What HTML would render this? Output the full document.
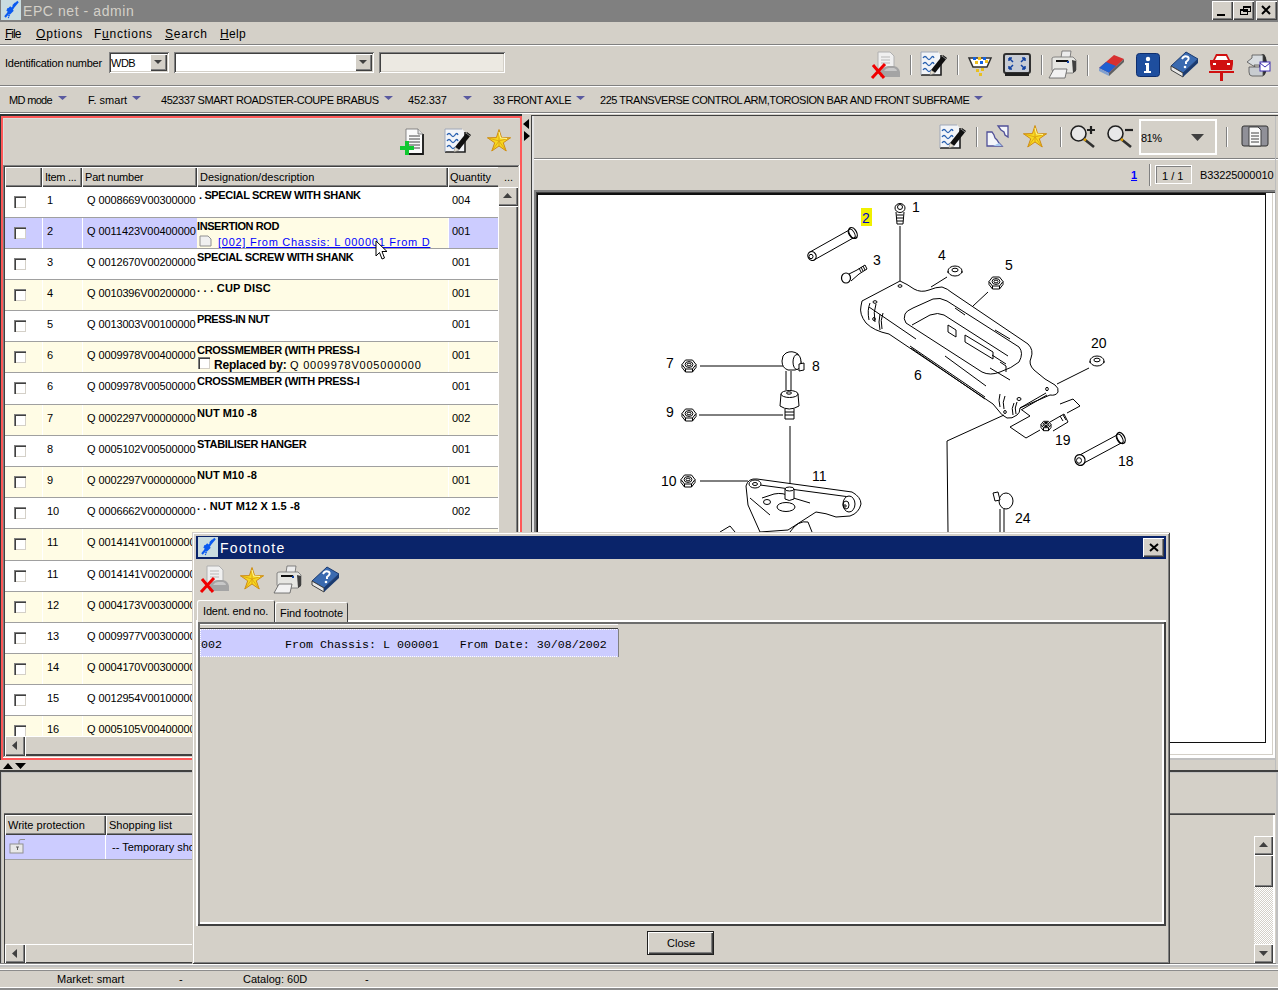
<!DOCTYPE html>
<html><head><meta charset="utf-8">
<style>
*{margin:0;padding:0;box-sizing:border-box}
html,body{width:1278px;height:990px;overflow:hidden;background:#d4d0c8;font-family:"Liberation Sans",sans-serif;font-size:11px;color:#000;position:relative}
.a{position:absolute}
.t{position:absolute;white-space:nowrap;line-height:1}
.raised{box-shadow:inset 1px 1px #fff,inset -1px -1px #404040,inset -2px -2px #808080;background:#d4d0c8}
.sunk{box-shadow:inset 1px 1px #808080,inset -1px -1px #fff,inset 2px 2px #404040,inset -2px -2px #d4d0c8}
svg{overflow:visible}
</style></head><body>
<div class="a" style="left:0px;top:0px;width:1278px;height:22px;background:#808080"></div><svg class="a" style="left:1px;top:0px" width="20" height="20" viewBox="0 0 20 20"><rect width="20" height="20" fill="#c9dce0"/><path d="M4 17 L17 1.5" stroke="#0a5af0" stroke-width="2"/><path d="M7 13 l5 -5 M6 11 l4 -4 M8 14 l4 -4 M12 6 l3 -3" stroke="#0a5af0" stroke-width="2.2"/><circle cx="7" cy="9" r="0.9" fill="#0a5af0"/><circle cx="8" cy="15.5" r="0.9" fill="#0a5af0"/><circle cx="7.5" cy="17.5" r="0.7" fill="#0a5af0"/></svg><div class="t" style="left:23px;top:4px;font-size:14px;color:#d4d0c8;letter-spacing:0.571px;">EPC net - admin</div><div class="a raised" style="left:1212px;top:1px;width:21px;height:19px;"></div><div class="a raised" style="left:1233px;top:1px;width:21px;height:19px;"></div><div class="a raised" style="left:1256px;top:1px;width:21px;height:19px;"></div><div class="a" style="left:1217px;top:14px;width:8px;height:2px;background:#000"></div><div class="a" style="left:1240px;top:9px;width:8px;height:6px;border:1px solid #000;border-top-width:2px"></div><div class="a" style="left:1243px;top:6px;width:8px;height:6px;border:1px solid #000;border-top-width:2px"></div><svg class="a" style="left:1261px;top:5px" width="11" height="10" viewBox="0 0 11 10"><path d="M1 1 L9 9 M9 1 L1 9" stroke="#000" stroke-width="2"/></svg><div class="t" style="left:5px;top:28px;font-size:12px;;letter-spacing:-1.000px;"><u>F</u>ile</div><div class="t" style="left:36px;top:28px;font-size:12px;;letter-spacing:0.833px;"><u>O</u>ptions</div><div class="t" style="left:94px;top:28px;font-size:12px;;letter-spacing:0.750px;">F<u>u</u>nctions</div><div class="t" style="left:165px;top:28px;font-size:12px;;letter-spacing:0.800px;"><u>S</u>earch</div><div class="t" style="left:220px;top:28px;font-size:12px;;letter-spacing:0.333px;"><u>H</u>elp</div><div class="a" style="left:0px;top:44px;width:1278px;height:1px;background:#808080"></div><div class="a" style="left:0px;top:45px;width:1278px;height:1px;background:#fff"></div><div class="t" style="left:5px;top:58px;font-size:11px;;letter-spacing:-0.250px;">Identification number</div><div class="a sunk" style="left:109px;top:52px;width:60px;height:21px;background:#fff"></div><div class="t" style="left:111px;top:58px;font-size:11px;;letter-spacing:-0.500px;">WDB</div><div class="a raised" style="left:150px;top:54px;width:17px;height:17px;"></div><svg class="a" style="left:154px;top:60px" width="8" height="4" viewBox="0 0 8 4"><path d="M0 0 H8 L4.0 4 Z" fill="#404040"/></svg><div class="a sunk" style="left:174px;top:52px;width:200px;height:21px;background:#fff"></div><div class="a raised" style="left:355px;top:54px;width:17px;height:17px;"></div><svg class="a" style="left:359px;top:60px" width="8" height="4" viewBox="0 0 8 4"><path d="M0 0 H8 L4.0 4 Z" fill="#404040"/></svg><div class="a sunk" style="left:379px;top:52px;width:126px;height:21px;background:#ece9e2"></div><svg class="a" style="left:870px;top:51px" width="31" height="29" viewBox="0 0 31 29"><path d="M8 1 h12 l4 4 v15 h-16z" fill="#f0f0f0" stroke="#b0b0b0"/><path d="M11 6h9M11 9h9M11 12h9" stroke="#b8b8b8"/><path d="M10 22 Q12 16 18 15 H24 Q29 16 30 21 V26 H10Z" fill="#a4a4a4"/><path d="M14 20 Q16 17 19 17 H24 Q27 18 27 20Z" fill="#c8c8c8"/><path d="M3 14 L14 27 M15 13 L2 27" stroke="#f00000" stroke-width="3"/></svg><div class="a" style="left:910px;top:55px;width:1px;height:20px;background:#808080"></div><div class="a" style="left:911px;top:55px;width:1px;height:20px;background:#fff"></div><svg class="a" style="left:920px;top:51px" width="28" height="25" viewBox="0 0 28 25"><path d="M1 1 H18 L21 4 V24 H1Z" fill="#f2f4f8"/><path d="M21 4 V24 H1" fill="none" stroke="#202020" stroke-width="1.6"/><path d="M1 24 V1 H18" fill="none" stroke="#a0a8b8" stroke-width="1"/><path d="M3 7 q2-3 4 0 t4 0 t3 0 M3 13 q2-3 4 0 t4 0 t3 0 M3 19 q2-3 4 0 t4 0" fill="none" stroke="#2860b0" stroke-width="1.3"/><path d="M11 19 L23 4 L27 7 L15 22 Z" fill="#101010"/><path d="M11 19 L15 22 L10 24Z" fill="#e8e0d0" stroke="#808080" stroke-width="0.5"/><path d="M22 5 l4 3" stroke="#909090" stroke-width="1"/></svg><div class="a" style="left:957px;top:55px;width:1px;height:20px;background:#808080"></div><div class="a" style="left:958px;top:55px;width:1px;height:20px;background:#fff"></div><svg class="a" style="left:968px;top:55px" width="24" height="22" viewBox="0 0 24 22"><path d="M1 3 H23 L19 12 H5 Z" fill="#fff" stroke="#303030" stroke-width="1.5"/><rect x="5" y="2" width="3" height="3" fill="#1060e0"/><rect x="10" y="2" width="3" height="3" fill="#f0c020"/><rect x="15" y="2" width="3" height="3" fill="#1060e0"/><rect x="7" y="6" width="3" height="3" fill="#f0c020"/><rect x="12" y="6" width="3" height="3" fill="#1060e0"/><rect x="17" y="5" width="3" height="3" fill="#f0c020"/><rect x="8" y="14" width="3" height="3" fill="#e8c020"/><rect x="13" y="13" width="3" height="3" fill="#e8c020"/><rect x="11" y="18" width="3" height="3" fill="#e8c020"/></svg><svg class="a" style="left:1003px;top:53px" width="28" height="24" viewBox="0 0 28 24"><rect x="1" y="1" width="26" height="19" rx="2" fill="#c8ccd4" stroke="#303030" stroke-width="2"/><rect x="2" y="20" width="24" height="3" fill="#202020"/><path d="M6 5 l4 4 M6 5 v3 M6 5 h3 M22 5 l-4 4 M22 5 v3 M22 5 h-3 M6 16 l4-4 M6 16 v-3 M6 16 h3 M22 16 l-4-4 M22 16 v-3 M22 16 h-3" stroke="#1040a0" stroke-width="1.5"/></svg><div class="a" style="left:1041px;top:55px;width:1px;height:20px;background:#808080"></div><div class="a" style="left:1042px;top:55px;width:1px;height:20px;background:#fff"></div><svg class="a" style="left:1049px;top:50px" width="28" height="29" viewBox="0 0 28 29"><path d="M13 1 h9 l-1 7 h-9z" fill="#ececec" stroke="#6a6a6a" stroke-width="0.8"/><path d="M3 8 Q4 7 6 7 H24 L27 10 V20 L24 23 H5 L3 20Z" fill="#e6e6e2" stroke="#707070" stroke-width="0.8"/><path d="M7 10 H19 L20 12 H7Z" fill="#101010"/><rect x="18" y="11" width="2" height="2" fill="#1040a0"/><path d="M23 10 L27 11 V21 L24 23Z" fill="#404040"/><path d="M5 19 H18 L16 28 H0Z" fill="#f2f2f2" stroke="#5a5a5a" stroke-width="0.8"/></svg><div class="a" style="left:1087px;top:55px;width:1px;height:21px;background:#808080"></div><div class="a" style="left:1088px;top:55px;width:1px;height:21px;background:#fff"></div><svg class="a" style="left:1098px;top:51px" width="27" height="26" viewBox="0 0 27 26"><path d="M1 17 L16 4 L26 8 L11 22 Z" fill="#d83030"/><path d="M1 17 L8 11 L18 15 L11 22 Z" fill="#2060d0"/><path d="M1 17 L11 22 L11 25 L1 20 Z" fill="#80a0d0"/><path d="M11 22 L26 8 L26 11 L11 25z" fill="#606060"/></svg><svg class="a" style="left:1136px;top:53px" width="24" height="24" viewBox="0 0 24 24"><rect x="0.5" y="0.5" width="23" height="23" rx="3" fill="#1e4e9e" stroke="#0e2e6e"/><circle cx="12" cy="6" r="2.2" fill="#fff"/><path d="M9 10 h4 v8 h2 v2 h-7 v-2 h2 v-6 h-1z" fill="#fff"/></svg><svg class="a" style="left:1170px;top:51px" width="29" height="27" viewBox="0 0 29 27"><path d="M1 15 L16 1 L28 8 L13 22 Z" fill="#3a6ab0" stroke="#1a3a70"/><path d="M1 15 L13 22 L13 26 L1 19 Z" fill="#e8e8e8" stroke="#404040"/><path d="M13 22 L28 8 L28 12 L13 26z" fill="#1a3a70"/><path d="M12 8 q2-4 6-2 q2 2 -2 5 v2" fill="none" stroke="#fff" stroke-width="2"/><circle cx="15" cy="16" r="1.3" fill="#fff"/></svg><svg class="a" style="left:1208px;top:51px" width="27" height="30" viewBox="0 0 27 30"><path d="M5 9 L8 3 H19 L22 9 H25 V13 L24 19 H3 L2 13 V9 Z" fill="#d01010"/><path d="M9 5 H18 L20 9 H7Z" fill="#fff"/><rect x="5" y="12" width="3" height="2" fill="#fff"/><rect x="19" y="12" width="3" height="2" fill="#fff"/><rect x="1" y="20" width="25" height="2" fill="#d01010"/><rect x="12" y="21" width="3" height="9" fill="#d01010"/></svg><svg class="a" style="left:1246px;top:53px" width="25" height="24" viewBox="0 0 25 24"><ellipse cx="17" cy="12" rx="4" ry="11" fill="#303030"/><path d="M6 2 H17 V12 H8 L9 14 L1 9 L6 5Z" fill="#d8dce0" stroke="#505050" stroke-width="0.8"/><path d="M3 14 H17 V23 H6 Q3 23 3 19Z" fill="#c8ccd0" stroke="#505050" stroke-width="0.8"/><rect x="14" y="9" width="10" height="9" fill="#fff" stroke="#4030b0" stroke-width="1"/><path d="M14 10 L19 14 L24 10" fill="none" stroke="#4030b0" stroke-width="1"/></svg><div class="a" style="left:0px;top:85px;width:1278px;height:1px;background:#808080"></div><div class="a" style="left:0px;top:86px;width:1278px;height:1px;background:#fff"></div><div class="t" style="left:9px;top:95px;font-size:11px;;letter-spacing:-0.667px;">MD mode</div><svg class="a" style="left:58px;top:96px" width="9" height="4" viewBox="0 0 9 4"><path d="M0 0 H9 L4.5 4 Z" fill="#5a5aa0"/></svg><div class="t" style="left:88px;top:95px;font-size:11px;;letter-spacing:0.000px;">F. smart</div><svg class="a" style="left:132px;top:96px" width="9" height="4" viewBox="0 0 9 4"><path d="M0 0 H9 L4.5 4 Z" fill="#5a5aa0"/></svg><div class="t" style="left:161px;top:95px;font-size:11px;;letter-spacing:-0.455px;">452337 SMART ROADSTER-COUPE BRABUS</div><svg class="a" style="left:384px;top:96px" width="9" height="4" viewBox="0 0 9 4"><path d="M0 0 H9 L4.5 4 Z" fill="#5a5aa0"/></svg><div class="t" style="left:408px;top:95px;font-size:11px;;letter-spacing:-0.167px;">452.337</div><svg class="a" style="left:463px;top:96px" width="9" height="4" viewBox="0 0 9 4"><path d="M0 0 H9 L4.5 4 Z" fill="#5a5aa0"/></svg><div class="t" style="left:493px;top:95px;font-size:11px;;letter-spacing:-0.417px;">33 FRONT AXLE</div><svg class="a" style="left:576px;top:96px" width="9" height="4" viewBox="0 0 9 4"><path d="M0 0 H9 L4.5 4 Z" fill="#5a5aa0"/></svg><div class="t" style="left:600px;top:95px;font-size:11px;;letter-spacing:-0.474px;">225 TRANSVERSE CONTROL ARM,TOROSION BAR AND FRONT SUBFRAME</div><svg class="a" style="left:974px;top:96px" width="9" height="4" viewBox="0 0 9 4"><path d="M0 0 H9 L4.5 4 Z" fill="#5a5aa0"/></svg><div class="a" style="left:0px;top:112px;width:1278px;height:1px;background:#808080"></div><div class="a" style="left:0px;top:113px;width:1278px;height:1px;background:#fff"></div><div class="a" style="left:0px;top:114px;width:522px;height:2px;background:#2b3535"></div><div class="a" style="left:0px;top:114px;width:1px;height:646px;background:#2b3535"></div><div class="a" style="left:1px;top:116px;width:521px;height:644px;border:2px solid #ff5858"></div><div class="a" style="left:3px;top:757px;width:516px;height:1px;background:#fff"></div><div class="a" style="left:3px;top:118px;width:1px;height:638px;background:#d8e0dc"></div><div class="a" style="left:3px;top:118px;width:516px;height:1px;background:#d8e0dc"></div><svg class="a" style="left:400px;top:128px" width="24" height="28" viewBox="0 0 24 28"><path d="M6 1 H18 L23 6 V26 H6Z" fill="#fafafa" stroke="#707070" stroke-width="0.8"/><path d="M23 6 V26 H6" fill="none" stroke="#181818" stroke-width="1.8"/><path d="M18 1 V6 H23" fill="#e0e0e0" stroke="#707070" stroke-width="0.8"/><path d="M9 8h11M9 11h11M9 14h11M9 17h11M9 20h11" stroke="#303030" stroke-width="0.9"/><path d="M5 13 h4 v5 h5 v4 h-5 v5 h-4 v-5 h-5 v-4 h5z" fill="#10c830"/></svg><svg class="a" style="left:444px;top:128px" width="28" height="25" viewBox="0 0 28 25"><path d="M1 1 H18 L21 4 V24 H1Z" fill="#f2f4f8"/><path d="M21 4 V24 H1" fill="none" stroke="#202020" stroke-width="1.6"/><path d="M1 24 V1 H18" fill="none" stroke="#a0a8b8" stroke-width="1"/><path d="M3 7 q2-3 4 0 t4 0 t3 0 M3 13 q2-3 4 0 t4 0 t3 0 M3 19 q2-3 4 0 t4 0" fill="none" stroke="#2860b0" stroke-width="1.3"/><path d="M11 19 L23 4 L27 7 L15 22 Z" fill="#101010"/><path d="M11 19 L15 22 L10 24Z" fill="#e8e0d0" stroke="#808080" stroke-width="0.5"/><path d="M22 5 l4 3" stroke="#909090" stroke-width="1"/></svg><svg class="a" style="left:487px;top:129px" width="24" height="23" viewBox="0 0 24 23"><path d="M12 0.5 L14.6 8.6 L23.5 8.8 L16.3 13.8 L19.2 22 L12 17 L4.8 22 L7.7 13.8 L0.5 8.8 L9.4 8.6 Z" fill="#f8d820" stroke="#c88010" stroke-width="0.9"/><path d="M12 1 L12 17 M0.5 8.8 L12 12 L23.5 8.8 M4.8 22 L12 12 L19.2 22" fill="none" stroke="#d8a010" stroke-width="0.8"/><path d="M12 3 L13.5 9 L20 9.5" fill="none" stroke="#fff8a0" stroke-width="1"/></svg><svg class="a" style="left:523px;top:119px" width="7" height="23" viewBox="0 0 7 23"><path d="M6 0 V10 L0 5Z M1 12 V22 L7 17Z" fill="#000"/></svg><div class="a" style="left:3px;top:165px;width:516px;height:1px;background:#808080"></div><div class="a" style="left:3px;top:165px;width:1px;height:592px;background:#808080"></div><div class="a" style="left:4px;top:166px;width:514px;height:1px;background:#404040"></div><div class="a" style="left:4px;top:166px;width:1px;height:590px;background:#404040"></div><div class="a" style="left:519px;top:165px;width:1px;height:592px;background:#fff"></div><div class="a" style="left:5px;top:167px;width:37px;height:20px;background:#d4d0c8;box-shadow:inset 1px 1px #fff,inset -1px -1px #404040,inset -2px -2px #808080"></div><div class="a" style="left:42px;top:167px;width:40px;height:20px;background:#d4d0c8;box-shadow:inset 1px 1px #fff,inset -1px -1px #404040,inset -2px -2px #808080"></div><div class="t" style="left:45px;top:172px;font-size:11px;;letter-spacing:-0.286px;">Item ...</div><div class="a" style="left:82px;top:167px;width:115px;height:20px;background:#d4d0c8;box-shadow:inset 1px 1px #fff,inset -1px -1px #404040,inset -2px -2px #808080"></div><div class="t" style="left:85px;top:172px;font-size:11px;;letter-spacing:-0.200px;">Part number</div><div class="a" style="left:197px;top:167px;width:251px;height:20px;background:#d4d0c8;box-shadow:inset 1px 1px #fff,inset -1px -1px #404040,inset -2px -2px #808080"></div><div class="t" style="left:200px;top:172px;font-size:11px;;letter-spacing:0.000px;">Designation/description</div><div class="a" style="left:448px;top:167px;width:50px;height:20px;background:#d4d0c8;box-shadow:inset 1px 1px #fff,inset 0 -1px #404040,inset 0 -2px #808080"></div><div class="t" style="left:450px;top:172px;font-size:11px;;letter-spacing:0.000px;">Quantity</div><div class="a" style="left:498px;top:167px;width:21px;height:20px;background:#d4d0c8"></div><div class="t" style="left:504px;top:172px;font-size:11px;;">...</div><div class="a" style="left:5px;top:187px;width:493px;height:30px;background:#fff"></div><div class="a" style="left:5px;top:217px;width:493px;height:1px;background:#a0a0a0"></div><div class="a" style="left:14px;top:196px;width:12px;height:12px;background:#fff;box-shadow:inset 1px 1px #808080,inset 2px 2px #404040,inset -1px -1px #d4d0c8"></div><div class="t" style="left:47px;top:195px;font-size:11px;;">1</div><div class="a" style="left:82px;top:187px;width:115px;height:30px;overflow:hidden"><div class="t" style="left:5px;top:8px;font-size:11px;;letter-spacing:-0.118px;">Q 0008669V00300000</div></div><div class="t" style="left:199px;top:190px;font-size:11px;font-weight:bold;letter-spacing:-0.360px;">. SPECIAL SCREW WITH SHANK</div><div class="t" style="left:452px;top:195px;font-size:11px;;">004</div><div class="a" style="left:5px;top:218px;width:493px;height:30px;background:#ccccff"></div><div class="a" style="left:197px;top:218px;width:251px;height:30px;background:#fffce5"></div><div class="a" style="left:42px;top:218px;width:1px;height:30px;background:#fff"></div><div class="a" style="left:82px;top:218px;width:1px;height:30px;background:#fff"></div><div class="a" style="left:448px;top:218px;width:1px;height:30px;background:#fff"></div><div class="a" style="left:5px;top:248px;width:493px;height:1px;background:#a0a0a0"></div><div class="a" style="left:14px;top:227px;width:12px;height:12px;background:#fff;box-shadow:inset 1px 1px #808080,inset 2px 2px #404040,inset -1px -1px #d4d0c8"></div><div class="t" style="left:47px;top:226px;font-size:11px;;">2</div><div class="a" style="left:82px;top:218px;width:115px;height:30px;overflow:hidden"><div class="t" style="left:5px;top:8px;font-size:11px;;letter-spacing:-0.059px;">Q 0011423V00400000</div></div><div class="t" style="left:197px;top:221px;font-size:11px;font-weight:bold;letter-spacing:-0.417px;">INSERTION ROD</div><div class="t" style="left:452px;top:226px;font-size:11px;;">001</div><div class="a" style="left:5px;top:249px;width:493px;height:30px;background:#fff"></div><div class="a" style="left:5px;top:279px;width:493px;height:1px;background:#a0a0a0"></div><div class="a" style="left:14px;top:258px;width:12px;height:12px;background:#fff;box-shadow:inset 1px 1px #808080,inset 2px 2px #404040,inset -1px -1px #d4d0c8"></div><div class="t" style="left:47px;top:257px;font-size:11px;;">3</div><div class="a" style="left:82px;top:249px;width:115px;height:30px;overflow:hidden"><div class="t" style="left:5px;top:8px;font-size:11px;;letter-spacing:-0.118px;">Q 0012670V00200000</div></div><div class="t" style="left:197px;top:252px;font-size:11px;font-weight:bold;letter-spacing:-0.348px;">SPECIAL SCREW WITH SHANK</div><div class="t" style="left:452px;top:257px;font-size:11px;;">001</div><div class="a" style="left:5px;top:280px;width:493px;height:30px;background:#fffce5"></div><div class="a" style="left:42px;top:280px;width:1px;height:30px;background:#fff"></div><div class="a" style="left:82px;top:280px;width:1px;height:30px;background:#fff"></div><div class="a" style="left:448px;top:280px;width:1px;height:30px;background:#fff"></div><div class="a" style="left:5px;top:310px;width:493px;height:1px;background:#a0a0a0"></div><div class="a" style="left:14px;top:289px;width:12px;height:12px;background:#fff;box-shadow:inset 1px 1px #808080,inset 2px 2px #404040,inset -1px -1px #d4d0c8"></div><div class="t" style="left:47px;top:288px;font-size:11px;;">4</div><div class="a" style="left:82px;top:280px;width:115px;height:30px;overflow:hidden"><div class="t" style="left:5px;top:8px;font-size:11px;;letter-spacing:-0.118px;">Q 0010396V00200000</div></div><div class="t" style="left:197px;top:283px;font-size:11px;font-weight:bold;letter-spacing:0.231px;">. . . CUP DISC</div><div class="t" style="left:452px;top:288px;font-size:11px;;">001</div><div class="a" style="left:5px;top:311px;width:493px;height:30px;background:#fff"></div><div class="a" style="left:5px;top:341px;width:493px;height:1px;background:#a0a0a0"></div><div class="a" style="left:14px;top:320px;width:12px;height:12px;background:#fff;box-shadow:inset 1px 1px #808080,inset 2px 2px #404040,inset -1px -1px #d4d0c8"></div><div class="t" style="left:47px;top:319px;font-size:11px;;">5</div><div class="a" style="left:82px;top:311px;width:115px;height:30px;overflow:hidden"><div class="t" style="left:5px;top:8px;font-size:11px;;letter-spacing:-0.118px;">Q 0013003V00100000</div></div><div class="t" style="left:197px;top:314px;font-size:11px;font-weight:bold;letter-spacing:-0.455px;">PRESS-IN NUT</div><div class="t" style="left:452px;top:319px;font-size:11px;;">001</div><div class="a" style="left:5px;top:342px;width:493px;height:30px;background:#fffce5"></div><div class="a" style="left:42px;top:342px;width:1px;height:30px;background:#fff"></div><div class="a" style="left:82px;top:342px;width:1px;height:30px;background:#fff"></div><div class="a" style="left:448px;top:342px;width:1px;height:30px;background:#fff"></div><div class="a" style="left:5px;top:372px;width:493px;height:1px;background:#a0a0a0"></div><div class="a" style="left:14px;top:351px;width:12px;height:12px;background:#fff;box-shadow:inset 1px 1px #808080,inset 2px 2px #404040,inset -1px -1px #d4d0c8"></div><div class="t" style="left:47px;top:350px;font-size:11px;;">6</div><div class="a" style="left:82px;top:342px;width:115px;height:30px;overflow:hidden"><div class="t" style="left:5px;top:8px;font-size:11px;;letter-spacing:-0.118px;">Q 0009978V00400000</div></div><div class="t" style="left:197px;top:345px;font-size:11px;font-weight:bold;letter-spacing:-0.292px;">CROSSMEMBER (WITH PRESS-I</div><div class="t" style="left:452px;top:350px;font-size:11px;;">001</div><div class="a" style="left:5px;top:373px;width:493px;height:31px;background:#fff"></div><div class="a" style="left:5px;top:404px;width:493px;height:1px;background:#a0a0a0"></div><div class="a" style="left:14px;top:382px;width:12px;height:12px;background:#fff;box-shadow:inset 1px 1px #808080,inset 2px 2px #404040,inset -1px -1px #d4d0c8"></div><div class="t" style="left:47px;top:381px;font-size:11px;;">6</div><div class="a" style="left:82px;top:373px;width:115px;height:31px;overflow:hidden"><div class="t" style="left:5px;top:8px;font-size:11px;;letter-spacing:-0.118px;">Q 0009978V00500000</div></div><div class="t" style="left:197px;top:376px;font-size:11px;font-weight:bold;letter-spacing:-0.292px;">CROSSMEMBER (WITH PRESS-I</div><div class="t" style="left:452px;top:381px;font-size:11px;;">001</div><div class="a" style="left:5px;top:405px;width:493px;height:30px;background:#fffce5"></div><div class="a" style="left:42px;top:405px;width:1px;height:30px;background:#fff"></div><div class="a" style="left:82px;top:405px;width:1px;height:30px;background:#fff"></div><div class="a" style="left:448px;top:405px;width:1px;height:30px;background:#fff"></div><div class="a" style="left:5px;top:435px;width:493px;height:1px;background:#a0a0a0"></div><div class="a" style="left:14px;top:414px;width:12px;height:12px;background:#fff;box-shadow:inset 1px 1px #808080,inset 2px 2px #404040,inset -1px -1px #d4d0c8"></div><div class="t" style="left:47px;top:413px;font-size:11px;;">7</div><div class="a" style="left:82px;top:405px;width:115px;height:30px;overflow:hidden"><div class="t" style="left:5px;top:8px;font-size:11px;;letter-spacing:-0.118px;">Q 0002297V00000000</div></div><div class="t" style="left:197px;top:408px;font-size:11px;font-weight:bold;letter-spacing:0.000px;">NUT M10 -8</div><div class="t" style="left:452px;top:413px;font-size:11px;;">002</div><div class="a" style="left:5px;top:436px;width:493px;height:30px;background:#fff"></div><div class="a" style="left:5px;top:466px;width:493px;height:1px;background:#a0a0a0"></div><div class="a" style="left:14px;top:445px;width:12px;height:12px;background:#fff;box-shadow:inset 1px 1px #808080,inset 2px 2px #404040,inset -1px -1px #d4d0c8"></div><div class="t" style="left:47px;top:444px;font-size:11px;;">8</div><div class="a" style="left:82px;top:436px;width:115px;height:30px;overflow:hidden"><div class="t" style="left:5px;top:8px;font-size:11px;;letter-spacing:-0.118px;">Q 0005102V00500000</div></div><div class="t" style="left:197px;top:439px;font-size:11px;font-weight:bold;letter-spacing:-0.344px;">STABILISER HANGER</div><div class="t" style="left:452px;top:444px;font-size:11px;;">001</div><div class="a" style="left:5px;top:467px;width:493px;height:30px;background:#fffce5"></div><div class="a" style="left:42px;top:467px;width:1px;height:30px;background:#fff"></div><div class="a" style="left:82px;top:467px;width:1px;height:30px;background:#fff"></div><div class="a" style="left:448px;top:467px;width:1px;height:30px;background:#fff"></div><div class="a" style="left:5px;top:497px;width:493px;height:1px;background:#a0a0a0"></div><div class="a" style="left:14px;top:476px;width:12px;height:12px;background:#fff;box-shadow:inset 1px 1px #808080,inset 2px 2px #404040,inset -1px -1px #d4d0c8"></div><div class="t" style="left:47px;top:475px;font-size:11px;;">9</div><div class="a" style="left:82px;top:467px;width:115px;height:30px;overflow:hidden"><div class="t" style="left:5px;top:8px;font-size:11px;;letter-spacing:-0.118px;">Q 0002297V00000000</div></div><div class="t" style="left:197px;top:470px;font-size:11px;font-weight:bold;letter-spacing:0.000px;">NUT M10 -8</div><div class="t" style="left:452px;top:475px;font-size:11px;;">001</div><div class="a" style="left:5px;top:498px;width:493px;height:30px;background:#fff"></div><div class="a" style="left:5px;top:528px;width:493px;height:1px;background:#a0a0a0"></div><div class="a" style="left:14px;top:507px;width:12px;height:12px;background:#fff;box-shadow:inset 1px 1px #808080,inset 2px 2px #404040,inset -1px -1px #d4d0c8"></div><div class="t" style="left:47px;top:506px;font-size:11px;;">10</div><div class="a" style="left:82px;top:498px;width:115px;height:30px;overflow:hidden"><div class="t" style="left:5px;top:8px;font-size:11px;;letter-spacing:-0.118px;">Q 0006662V00000000</div></div><div class="t" style="left:197px;top:501px;font-size:11px;font-weight:bold;letter-spacing:0.105px;">. . NUT M12 X 1.5 -8</div><div class="t" style="left:452px;top:506px;font-size:11px;;">002</div><div class="a" style="left:5px;top:529px;width:493px;height:31px;background:#fffce5"></div><div class="a" style="left:42px;top:529px;width:1px;height:31px;background:#fff"></div><div class="a" style="left:82px;top:529px;width:1px;height:31px;background:#fff"></div><div class="a" style="left:448px;top:529px;width:1px;height:31px;background:#fff"></div><div class="a" style="left:5px;top:560px;width:493px;height:1px;background:#a0a0a0"></div><div class="a" style="left:14px;top:538px;width:12px;height:12px;background:#fff;box-shadow:inset 1px 1px #808080,inset 2px 2px #404040,inset -1px -1px #d4d0c8"></div><div class="t" style="left:47px;top:537px;font-size:11px;;">11</div><div class="a" style="left:82px;top:529px;width:115px;height:31px;overflow:hidden"><div class="t" style="left:5px;top:8px;font-size:11px;;letter-spacing:-0.118px;">Q 0014141V00100000</div></div><div class="t" style="left:452px;top:537px;font-size:11px;;">001</div><div class="a" style="left:5px;top:561px;width:493px;height:30px;background:#fff"></div><div class="a" style="left:5px;top:591px;width:493px;height:1px;background:#a0a0a0"></div><div class="a" style="left:14px;top:570px;width:12px;height:12px;background:#fff;box-shadow:inset 1px 1px #808080,inset 2px 2px #404040,inset -1px -1px #d4d0c8"></div><div class="t" style="left:47px;top:569px;font-size:11px;;">11</div><div class="a" style="left:82px;top:561px;width:115px;height:30px;overflow:hidden"><div class="t" style="left:5px;top:8px;font-size:11px;;letter-spacing:-0.118px;">Q 0014141V00200000</div></div><div class="t" style="left:452px;top:569px;font-size:11px;;">001</div><div class="a" style="left:5px;top:592px;width:493px;height:30px;background:#fffce5"></div><div class="a" style="left:42px;top:592px;width:1px;height:30px;background:#fff"></div><div class="a" style="left:82px;top:592px;width:1px;height:30px;background:#fff"></div><div class="a" style="left:448px;top:592px;width:1px;height:30px;background:#fff"></div><div class="a" style="left:5px;top:622px;width:493px;height:1px;background:#a0a0a0"></div><div class="a" style="left:14px;top:601px;width:12px;height:12px;background:#fff;box-shadow:inset 1px 1px #808080,inset 2px 2px #404040,inset -1px -1px #d4d0c8"></div><div class="t" style="left:47px;top:600px;font-size:11px;;">12</div><div class="a" style="left:82px;top:592px;width:115px;height:30px;overflow:hidden"><div class="t" style="left:5px;top:8px;font-size:11px;;letter-spacing:-0.118px;">Q 0004173V00300000</div></div><div class="t" style="left:452px;top:600px;font-size:11px;;">001</div><div class="a" style="left:5px;top:623px;width:493px;height:30px;background:#fff"></div><div class="a" style="left:5px;top:653px;width:493px;height:1px;background:#a0a0a0"></div><div class="a" style="left:14px;top:632px;width:12px;height:12px;background:#fff;box-shadow:inset 1px 1px #808080,inset 2px 2px #404040,inset -1px -1px #d4d0c8"></div><div class="t" style="left:47px;top:631px;font-size:11px;;">13</div><div class="a" style="left:82px;top:623px;width:115px;height:30px;overflow:hidden"><div class="t" style="left:5px;top:8px;font-size:11px;;letter-spacing:-0.118px;">Q 0009977V00300000</div></div><div class="t" style="left:452px;top:631px;font-size:11px;;">001</div><div class="a" style="left:5px;top:654px;width:493px;height:30px;background:#fffce5"></div><div class="a" style="left:42px;top:654px;width:1px;height:30px;background:#fff"></div><div class="a" style="left:82px;top:654px;width:1px;height:30px;background:#fff"></div><div class="a" style="left:448px;top:654px;width:1px;height:30px;background:#fff"></div><div class="a" style="left:5px;top:684px;width:493px;height:1px;background:#a0a0a0"></div><div class="a" style="left:14px;top:663px;width:12px;height:12px;background:#fff;box-shadow:inset 1px 1px #808080,inset 2px 2px #404040,inset -1px -1px #d4d0c8"></div><div class="t" style="left:47px;top:662px;font-size:11px;;">14</div><div class="a" style="left:82px;top:654px;width:115px;height:30px;overflow:hidden"><div class="t" style="left:5px;top:8px;font-size:11px;;letter-spacing:-0.118px;">Q 0004170V00300000</div></div><div class="t" style="left:452px;top:662px;font-size:11px;;">001</div><div class="a" style="left:5px;top:685px;width:493px;height:30px;background:#fff"></div><div class="a" style="left:5px;top:715px;width:493px;height:1px;background:#a0a0a0"></div><div class="a" style="left:14px;top:694px;width:12px;height:12px;background:#fff;box-shadow:inset 1px 1px #808080,inset 2px 2px #404040,inset -1px -1px #d4d0c8"></div><div class="t" style="left:47px;top:693px;font-size:11px;;">15</div><div class="a" style="left:82px;top:685px;width:115px;height:30px;overflow:hidden"><div class="t" style="left:5px;top:8px;font-size:11px;;letter-spacing:-0.118px;">Q 0012954V00100000</div></div><div class="t" style="left:452px;top:693px;font-size:11px;;">001</div><div class="a" style="left:5px;top:716px;width:493px;height:20px;background:#fffce5"></div><div class="a" style="left:42px;top:716px;width:1px;height:20px;background:#fff"></div><div class="a" style="left:82px;top:716px;width:1px;height:20px;background:#fff"></div><div class="a" style="left:448px;top:716px;width:1px;height:20px;background:#fff"></div><div class="a" style="left:14px;top:725px;width:12px;height:12px;background:#fff;box-shadow:inset 1px 1px #808080,inset 2px 2px #404040,inset -1px -1px #d4d0c8"></div><div class="t" style="left:47px;top:724px;font-size:11px;;">16</div><div class="a" style="left:82px;top:716px;width:115px;height:20px;overflow:hidden"><div class="t" style="left:5px;top:8px;font-size:11px;;letter-spacing:-0.118px;">Q 0005105V00400000</div></div><div class="t" style="left:452px;top:724px;font-size:11px;;">001</div><svg class="a" style="left:199px;top:235px" width="13" height="12" viewBox="0 0 13 12"><path d="M1 1 h8 l3 3 v7 h-11z" fill="#f0f0f0" stroke="#909090"/></svg><div class="t" style="left:218px;top:237px;font-size:11px;color:#0000ff;text-decoration:underline;letter-spacing:0.735px;">[002] From Chassis: L 000001 From D</div><div class="a" style="left:198px;top:357px;width:12px;height:12px;background:#fff;box-shadow:inset 1px 1px #808080,inset 2px 2px #404040,inset -1px -1px #d4d0c8"></div><div class="t" style="left:214px;top:359px;font-size:12px;font-weight:bold;letter-spacing:-0.182px;">Replaced by:</div><div class="t" style="left:290px;top:360px;font-size:11px;;letter-spacing:0.778px;">Q 0009978V005000000</div><svg class="a" style="left:375px;top:240px" width="13" height="21" viewBox="0 0 13 21"><path d="M1 1 V16 L4.5 12.5 L7 19 L9.5 18 L7 11.5 H12 Z" fill="#fff" stroke="#000" stroke-width="1"/></svg><div class="a" style="left:498px;top:187px;width:21px;height:549px;background:#d4d0c8"></div><div class="a" style="left:498px;top:187px;width:20px;height:19px;background:#d4d0c8;box-shadow:inset 1px 1px #fff,inset -1px -1px #404040,inset -2px -2px #808080"></div><svg class="a" style="left:503px;top:193px" width="9" height="5" viewBox="0 0 9 5"><path d="M0 5 H9 L4.5 0Z" fill="#404040"/></svg><div class="a" style="left:498px;top:206px;width:20px;height:530px;background:#d4d0c8;box-shadow:inset 1px 1px #fff,inset -1px -1px #404040,inset -2px -2px #808080"></div><div class="a" style="left:5px;top:736px;width:514px;height:20px;background:#d4d0c8"></div><div class="a" style="left:5px;top:736px;width:20px;height:20px;background:#d4d0c8;box-shadow:inset 1px 1px #fff,inset -1px -1px #404040,inset -2px -2px #808080"></div><svg class="a" style="left:12px;top:741px" width="5" height="9" viewBox="0 0 5 9"><path d="M5 0 V9 L0 4.5Z" fill="#404040"/></svg><div class="a" style="left:25px;top:736px;width:494px;height:20px;background:#d4d0c8;box-shadow:inset 1px 1px #fff,inset -1px -1px #404040,inset 0 -2px #404040"></div><svg class="a" style="left:3px;top:763px" width="24" height="7" viewBox="0 0 24 7"><path d="M0 6 H10 L5 0Z M12 0 H23 L17.5 6Z" fill="#000"/></svg><div class="a" style="left:531px;top:115px;width:747px;height:1px;background:#404040"></div><div class="a" style="left:531px;top:115px;width:1px;height:656px;background:#404040"></div><div class="a" style="left:532px;top:116px;width:2px;height:655px;background:#e4e4e4"></div><svg class="a" style="left:939px;top:124px" width="28" height="25" viewBox="0 0 28 25"><path d="M1 1 H18 L21 4 V24 H1Z" fill="#f2f4f8"/><path d="M21 4 V24 H1" fill="none" stroke="#202020" stroke-width="1.6"/><path d="M1 24 V1 H18" fill="none" stroke="#a0a8b8" stroke-width="1"/><path d="M3 7 q2-3 4 0 t4 0 t3 0 M3 13 q2-3 4 0 t4 0 t3 0 M3 19 q2-3 4 0 t4 0" fill="none" stroke="#2860b0" stroke-width="1.3"/><path d="M11 19 L23 4 L27 7 L15 22 Z" fill="#101010"/><path d="M11 19 L15 22 L10 24Z" fill="#e8e0d0" stroke="#808080" stroke-width="0.5"/><path d="M22 5 l4 3" stroke="#909090" stroke-width="1"/></svg><div class="a" style="left:976px;top:127px;width:1px;height:20px;background:#808080"></div><div class="a" style="left:977px;top:127px;width:1px;height:20px;background:#fff"></div><svg class="a" style="left:986px;top:125px" width="24" height="23" viewBox="0 0 24 23"><path d="M1 7 H6 L8 10 L9 13 L11 15 L13 18 L16 21 H1Z" fill="#f4f6fa" stroke="#505098" stroke-width="1.3"/><path d="M7 21 L13 18 L16 21Z" fill="#a8c8f0"/><path d="M12 1 H22 V12 L19 10 L18 7 L15 5 Z" fill="#f4f6fa" stroke="#505098" stroke-width="1.3"/></svg><svg class="a" style="left:1023px;top:125px" width="24" height="23" viewBox="0 0 24 23"><path d="M12 0.5 L14.6 8.6 L23.5 8.8 L16.3 13.8 L19.2 22 L12 17 L4.8 22 L7.7 13.8 L0.5 8.8 L9.4 8.6 Z" fill="#f8d820" stroke="#c88010" stroke-width="0.9"/><path d="M12 1 L12 17 M0.5 8.8 L12 12 L23.5 8.8 M4.8 22 L12 12 L19.2 22" fill="none" stroke="#d8a010" stroke-width="0.8"/><path d="M12 3 L13.5 9 L20 9.5" fill="none" stroke="#fff8a0" stroke-width="1"/></svg><div class="a" style="left:1060px;top:127px;width:1px;height:20px;background:#808080"></div><div class="a" style="left:1061px;top:127px;width:1px;height:20px;background:#fff"></div><svg class="a" style="left:1070px;top:125px" width="27" height="23" viewBox="0 0 27 23"><circle cx="8.5" cy="8.5" r="7.5" fill="#e8e8e8" stroke="#202020" stroke-width="1.6"/><path d="M14 14 L24 22" stroke="#303030" stroke-width="2.6"/><path d="M14 14 L16 15.5" stroke="#e0a000" stroke-width="2.6"/><path d="M17 5 h8 M21 1 v8" stroke="#202020" stroke-width="2.2"/></svg><svg class="a" style="left:1107px;top:125px" width="27" height="23" viewBox="0 0 27 23"><circle cx="8.5" cy="8.5" r="7.5" fill="#e8e8e8" stroke="#202020" stroke-width="1.6"/><path d="M14 14 L24 22" stroke="#303030" stroke-width="2.6"/><path d="M14 14 L16 15.5" stroke="#e0a000" stroke-width="2.6"/><path d="M18 5 h8" stroke="#202020" stroke-width="2.2"/></svg><div class="a" style="left:1139px;top:119px;width:78px;height:36px;border:2px solid #fff;background:#d4d0c8"></div><div class="t" style="left:1141px;top:133px;font-size:11px;;letter-spacing:-0.500px;">81%</div><svg class="a" style="left:1191px;top:134px" width="13" height="7" viewBox="0 0 13 7"><path d="M0 0 H13 L6.5 7Z" fill="#404040"/></svg><div class="a" style="left:1226px;top:127px;width:1px;height:20px;background:#808080"></div><div class="a" style="left:1227px;top:127px;width:1px;height:20px;background:#fff"></div><svg class="a" style="left:1241px;top:125px" width="28" height="22" viewBox="0 0 28 22"><rect x="1" y="1" width="26" height="20" rx="2" fill="#909098" stroke="#303030"/><path d="M8 2 h9 l3 3 v16 h-12z" fill="#fafafa" stroke="#404040"/><path d="M10 8h8M10 11h8M10 14h8M10 17h8" stroke="#404040"/></svg><div class="a" style="left:534px;top:158px;width:744px;height:1px;background:#808080"></div><div class="a" style="left:534px;top:159px;width:744px;height:1px;background:#fff"></div><div class="a" style="left:1275px;top:116px;width:1px;height:655px;background:#bdbdbd"></div><div class="t" style="left:1131px;top:170px;font-size:11px;color:#0000ff;text-decoration:underline;"><b>1</b></div><div class="a" style="left:1149px;top:164px;width:1px;height:22px;background:#808080"></div><div class="a" style="left:1150px;top:164px;width:1px;height:22px;background:#fff"></div><div class="a" style="left:1155px;top:165px;width:37px;height:19px;border:1px solid #fff;box-shadow:inset 1px 1px #808080"></div><div class="t" style="left:1162px;top:171px;font-size:11px;;">1 / 1</div><div class="t" style="left:1200px;top:170px;font-size:11px;letter-spacing:-0.1px;">B33225000010</div><div class="a" style="left:534px;top:190px;width:741px;height:568px;background:#fff;box-shadow:inset 2px 2px #808080,inset 3px 3px #404040"></div><div class="a" style="left:1272px;top:193px;width:1px;height:562px;background:#d4d0c8"></div><div class="a" style="left:537px;top:754px;width:736px;height:1px;background:#d4d0c8"></div><div class="a" style="left:537px;top:193px;width:729px;height:550px;border:1px solid #101010;border-top-width:2px;border-left-width:1px"></div><div class="a" style="left:534px;top:758px;width:741px;height:2px;background:#c0c0c0"></div><div class="a" style="left:531px;top:770px;width:747px;height:1px;background:#404040"></div><svg class="a" style="left:0;top:0" width="1278" height="990" viewBox="0 0 1278 990"><defs><clipPath id="dc"><rect x="538" y="195" width="727" height="547"/></clipPath></defs><g clip-path="url(#dc)" stroke="#000" stroke-width="1" fill="none"><path fill="#fff" d="M862,301 L900,281 Q907,284 914,289 Q921,293 929,290 Q936,287 942,287 Q948,289 951,292 L1028,344 Q1034,350 1031,358 Q1028,364 1034,370 L1045,379 L1055,385 Q1059,388 1058,392 Q1056,396 1050,395 L1020,408 Q1020,413 1017,415 Q1012,419 1007,418 Q1001,415 998,410 L993,404 L889,334 Q874,331 866,323 Q859,314 861,306 Z"/><path fill="#fff" d="M905,314 Q906,311 913,308 L933,299 Q940,297 947,301 L1019,347 Q1024,353 1019,362 Q1012,368 1000,372 Q990,376 982,372 L906,323 Q903,319 905,314 Z"/><path d="M912,325 L930,315 Q938,312 944,315 L1008,356 M992,355 L1006,364 M948,325 L956,330 L956,337 L948,332 Z M965,335 L993,352 L993,359 L965,342 Z M1000,362 L1006,366 L1006,372"/><path d="M869,307 L916,339 M945,356 L986,386 M910,346 L985,397 M911,348 L985,399 M990,368 L1010,380 M955,308 L965,315 M995,330 L1010,339"/><path d="M870,303 Q867,310 869,320 M876,304 Q873,312 875,322 M880,314 Q878,322 880,330 M883,313 Q880,320 882,329 M1000,394 Q998,400 1000,407 M1005,396 Q1002,402 1004,409 M1014,403 Q1011,408 1013,415 M1017,402 Q1014,408 1016,414"/><ellipse cx="874" cy="319" rx="1.3" ry="1.5"/><ellipse cx="1005" cy="412" rx="1.3" ry="1.5"/><ellipse cx="1019" cy="399" rx="2" ry="1.5"/><ellipse cx="900" cy="286" rx="2" ry="1.3"/><ellipse cx="875" cy="302" rx="2" ry="1.3"/><ellipse cx="1047" cy="389" rx="1.3" ry="1.7"/><path d="M1046,393 L1020,408 M1047,395 L1021,410"/><path fill="none" d="M1022,410 L1030,416 L1010,427 L1026,438 L1040,430 M1060,404 L1073,399 L1080,406 L1067,413"/><ellipse cx="900" cy="208" rx="5" ry="4.5" fill="#fff"/><circle cx="900" cy="207" r="2.5"/><path d="M896,212 L897,224 L903,224 L904,212 M897,215 h6 M897,218 h6 M897,221 h6 M900,226 V281"/><text x="912" y="212" font-size="14" stroke="none" fill="#000" font-family="Liberation Sans">1</text><path d="M814.2,259.9 L855.2,236.9 M809.8,252.1 L850.8,229.1"/><ellipse cx="853" cy="233" rx="3.6" ry="5.9" transform="rotate(-29.3 853 233)" fill="#fff" stroke-width="1.3"/><ellipse cx="851.7" cy="233.7" rx="2.7" ry="5.0" transform="rotate(-29.3 851.7 233.7)" fill="none"/><ellipse cx="812" cy="256" rx="4.0" ry="4.5" transform="rotate(-29.3 812 256)" fill="#fff" stroke-width="1.2"/><ellipse cx="811" cy="256.5" rx="2.0" ry="2.2"/><rect x="861" y="208" width="11" height="18" fill="#f0f000" stroke="none"/><text x="862" y="223" font-size="14" stroke="none" fill="#0000c8" font-family="Liberation Sans">2</text><path d="M849,274 L857,270 L865,265 L867,269 L859,274 L851,281" fill="#fff"/><path d="M859,268 l2,4 M861,267 l2,4 M863,266 l2,4"/><ellipse cx="846" cy="278" rx="4.5" ry="5" fill="#fff" stroke-width="1.2"/><text x="873" y="265" font-size="14" stroke="none" fill="#000" font-family="Liberation Sans">3</text><ellipse cx="955" cy="271" rx="7" ry="5" fill="#fff"/><ellipse cx="955" cy="270" rx="3.1" ry="1.8"/><path d="M948,271 v2 M962,271 v2"/><path d="M947,277 L931,287"/><text x="938" y="260" font-size="14" stroke="none" fill="#000" font-family="Liberation Sans">4</text><path d="M1003.0,281.5 L1003.0,284.5 L999.5,289.0 L992.5,289.0 L989.0,284.5 L989.0,281.5 M999.5,286.0 V289.0 M992.5,286.0 V289.0" fill="#fff"/><polygon points="1003.0,281.5 999.5,286.0 992.5,286.0 989.0,281.5 992.5,277.0 999.5,277.0" fill="#fff"/><ellipse cx="996" cy="281.5" rx="3.9" ry="2.9"/><ellipse cx="996" cy="281.5" rx="2.0" ry="1.4"/><path d="M988,292 L973,306"/><text x="1005" y="270" font-size="14" stroke="none" fill="#000" font-family="Liberation Sans">5</text><text x="914" y="380" font-size="14" stroke="none" fill="#000" font-family="Liberation Sans">6</text><ellipse cx="1097" cy="361" rx="7" ry="5" fill="#fff"/><ellipse cx="1097" cy="360" rx="3.1" ry="1.8"/><path d="M1090,361 v2 M1104,361 v2"/><path d="M1089,368 L1057,384"/><text x="1091" y="348" font-size="14" stroke="none" fill="#000" font-family="Liberation Sans">20</text><path d="M1050,422 L1064,414 L1066,418 L1068,422 L1053,431" fill="#fff"/><path d="M1060,416 l3,5 M1063,415 l3,5" /><path d="M1051.0,424.5 L1051.0,427.5 L1048.5,430.7 L1043.5,430.7 L1041.0,427.5 L1041.0,424.5 M1048.5,427.7 V430.7 M1043.5,427.7 V430.7" fill="#fff"/><polygon points="1051.0,424.5 1048.5,427.7 1043.5,427.7 1041.0,424.5 1043.5,421.3 1048.5,421.3" fill="#fff"/><ellipse cx="1046" cy="424.5" rx="2.8" ry="2.1"/><ellipse cx="1046" cy="424.5" rx="1.4" ry="1.0"/><text x="1055" y="445" font-size="14" stroke="none" fill="#000" font-family="Liberation Sans">19</text><path d="M1082.1,464.0 L1123.1,442.0 M1077.9,456.0 L1118.9,434.0"/><ellipse cx="1121" cy="438" rx="3.6" ry="5.9" transform="rotate(-28.2 1121 438)" fill="#fff" stroke-width="1.3"/><ellipse cx="1119.7" cy="438.7" rx="2.7" ry="5.0" transform="rotate(-28.2 1119.7 438.7)" fill="none"/><ellipse cx="1080" cy="460" rx="5.0" ry="5.5" transform="rotate(-28.2 1080 460)" fill="#fff" stroke-width="1.2"/><ellipse cx="1079" cy="460.5" rx="2.5" ry="2.8"/><text x="1118" y="466" font-size="14" stroke="none" fill="#000" font-family="Liberation Sans">18</text><path d="M696.0,364.5 L696.0,367.5 L692.5,372.0 L685.5,372.0 L682.0,367.5 L682.0,364.5 M692.5,369.0 V372.0 M685.5,369.0 V372.0" fill="#fff"/><polygon points="696.0,364.5 692.5,369.0 685.5,369.0 682.0,364.5 685.5,360.0 692.5,360.0" fill="#fff"/><ellipse cx="689" cy="364.5" rx="3.9" ry="2.9"/><ellipse cx="689" cy="364.5" rx="2.0" ry="1.4"/><text x="666" y="368" font-size="14" stroke="none" fill="#000" font-family="Liberation Sans">7</text><path d="M700,366 L783,366"/><path fill="#fff" d="M786,353 Q792,350 798,354 L801,362 Q801,369 795,370 L788,370 Q782,368 782,361 Q782,355 786,353Z"/><ellipse cx="797" cy="362" rx="4" ry="7.5" fill="#fff"/><path d="M799,364 L804,363 L804,370 L799,371Z" fill="#fff"/><path d="M786,371 V390 M791,371 V390"/><text x="812" y="371" font-size="14" stroke="none" fill="#000" font-family="Liberation Sans">8</text><path fill="#fff" d="M781,394 Q789,388 798,394 L799,406 Q789,412 780,406Z"/><ellipse cx="789.5" cy="394" rx="8.5" ry="3.5" fill="#fff"/><ellipse cx="789" cy="393" rx="2.5" ry="1.2"/><path d="M785,409 L785,419 L794,419 L794,409 M785,412 h9 M785,415 h9"/><path d="M696.0,413.5 L696.0,416.5 L692.5,421.0 L685.5,421.0 L682.0,416.5 L682.0,413.5 M692.5,418.0 V421.0 M685.5,418.0 V421.0" fill="#fff"/><polygon points="696.0,413.5 692.5,418.0 685.5,418.0 682.0,413.5 685.5,409.0 692.5,409.0" fill="#fff"/><ellipse cx="689" cy="413.5" rx="3.9" ry="2.9"/><ellipse cx="689" cy="413.5" rx="2.0" ry="1.4"/><text x="666" y="417" font-size="14" stroke="none" fill="#000" font-family="Liberation Sans">9</text><path d="M699,415 L783,415 M790,426 V487"/><path d="M695.0,479.5 L695.0,482.5 L691.5,487.0 L684.5,487.0 L681.0,482.5 L681.0,479.5 M691.5,484.0 V487.0 M684.5,484.0 V487.0" fill="#fff"/><polygon points="695.0,479.5 691.5,484.0 684.5,484.0 681.0,479.5 684.5,475.0 691.5,475.0" fill="#fff"/><ellipse cx="688" cy="479.5" rx="3.9" ry="2.9"/><ellipse cx="688" cy="479.5" rx="2.0" ry="1.4"/><text x="661" y="486" font-size="14" stroke="none" fill="#000" font-family="Liberation Sans">10</text><path d="M700,481 L748,481"/><text x="812" y="481" font-size="14" stroke="none" fill="#000" font-family="Liberation Sans">11</text><path fill="#fff" d="M746,486 Q748,478 757,479 L852,492 Q861,497 861,504 Q859,513 850,516 L836,517 Q826,513 816,512 L788,530 L760,532 L748,505 Z"/><path d="M760,485 L850,497 M750,498 L770,515 M762,498 L774,494 Q784,492 790,497 L810,503"/><ellipse cx="755" cy="484" rx="6" ry="4" fill="#fff"/><ellipse cx="755" cy="484" rx="2.5" ry="1.5"/><ellipse cx="849" cy="504" rx="6" ry="8" fill="#fff"/><ellipse cx="846" cy="505" rx="3" ry="4"/><circle cx="845" cy="506" r="1.2"/><path fill="#fff" d="M785,489 L785,499 Q789,502 794,499 L794,489Z"/><ellipse cx="789.5" cy="489" rx="4.5" ry="2" fill="#fff"/><ellipse cx="767" cy="502" rx="3.5" ry="2.5"/><ellipse cx="786" cy="507" rx="9" ry="4.5"/><path d="M790,532 Q798,520 808,522 L812,532"/><path d="M1004,415 L947,441 L948,532"/><ellipse cx="1006" cy="501" rx="7" ry="8" fill="#fff"/><path d="M993,493 L998,492 L1000,500 L995,501Z" fill="#fff"/><path d="M1000,509 V532 M1004,509 V532"/><text x="1015" y="523" font-size="14" stroke="none" fill="#000" font-family="Liberation Sans">24</text><path d="M720,532 L730,526 L735,532"/></g></svg><div class="a" style="left:0px;top:770px;width:1278px;height:2px;background:#404040"></div><div class="a" style="left:0px;top:770px;width:1px;height:194px;background:#404040"></div><div class="a" style="left:1px;top:772px;width:1px;height:192px;background:#c0c0c0"></div><div class="a" style="left:1px;top:772px;width:1277px;height:1px;background:#c0c0c0"></div><div class="a" style="left:0px;top:963px;width:1278px;height:1px;background:#808080"></div><div class="a" style="left:0px;top:964px;width:1278px;height:1px;background:#fff"></div><div class="a" style="left:1276px;top:772px;width:2px;height:192px;background:#c0c0c0"></div><div class="a" style="left:1273px;top:815px;width:2px;height:148px;background:#fff"></div><div class="a" style="left:4px;top:814px;width:1271px;height:1px;background:#404040"></div><div class="a" style="left:4px;top:813px;width:1271px;height:1px;background:#6a6a6a"></div><div class="a" style="left:4px;top:814px;width:1px;height:149px;background:#404040"></div><div class="a" style="left:5px;top:815px;width:101px;height:20px;background:#d4d0c8;box-shadow:inset 1px 1px #fff,inset -1px -1px #404040,inset -2px -2px #808080"></div><div class="t" style="left:8px;top:820px;font-size:11px;;">Write protection</div><div class="a" style="left:106px;top:815px;width:200px;height:20px;background:#d4d0c8;box-shadow:inset 1px 1px #fff,inset -1px -1px #404040,inset -2px -2px #808080"></div><div class="t" style="left:109px;top:820px;font-size:11px;;">Shopping list</div><div class="a" style="left:5px;top:835px;width:300px;height:24px;background:#ccccff"></div><div class="a" style="left:105px;top:835px;width:1px;height:24px;background:#fff"></div><div class="a" style="left:5px;top:859px;width:300px;height:1px;background:#a0a0a0"></div><svg class="a" style="left:9px;top:839px" width="18" height="15" viewBox="0 0 18 15"><rect x="1" y="5" width="13" height="9" fill="#e8e8e8" stroke="#909090"/><path d="M10 5 V2 Q10 0.5 12 0.5 H16" fill="none" stroke="#909090"/><path d="M7 8 h3 M8.5 8 v3" stroke="#606060"/></svg><div class="t" style="left:112px;top:842px;font-size:11px;;">-- Temporary shopping list</div><div class="a" style="left:5px;top:944px;width:190px;height:19px;background:#d4d0c8"></div><div class="a" style="left:5px;top:944px;width:20px;height:19px;box-shadow:inset 1px 1px #fff,inset -1px -1px #404040,inset -2px -2px #808080;background:#d4d0c8"></div><svg class="a" style="left:12px;top:949px" width="5" height="9" viewBox="0 0 5 9"><path d="M5 0 V9 L0 4.5Z" fill="#404040"/></svg><div class="a" style="left:25px;top:944px;width:170px;height:19px;box-shadow:inset 1px 1px #fff,inset -1px -1px #404040"></div><div class="a" style="left:1254px;top:836px;width:19px;height:19px;box-shadow:inset 1px 1px #fff,inset -1px -1px #404040,inset -2px -2px #808080;background:#d4d0c8"></div><svg class="a" style="left:1259px;top:842px" width="9" height="5" viewBox="0 0 9 5"><path d="M0 5 H9 L4.5 0Z" fill="#404040"/></svg><div class="a" style="left:1254px;top:855px;width:19px;height:32px;box-shadow:inset 1px 1px #fff,inset -1px -1px #404040,inset -2px -2px #808080;background:#d4d0c8"></div><div class="a" style="left:1254px;top:887px;width:19px;height:57px;background:repeating-conic-gradient(#fff 0 25%,#d4d0c8 0 50%) 0 0/2px 2px"></div><div class="a" style="left:1254px;top:944px;width:19px;height:19px;box-shadow:inset 1px 1px #fff,inset -1px -1px #404040,inset -2px -2px #808080;background:#d4d0c8"></div><svg class="a" style="left:1259px;top:951px" width="9" height="5" viewBox="0 0 9 5"><path d="M0 0 H9 L4.5 5Z" fill="#404040"/></svg><div class="a" style="left:0px;top:965px;width:1278px;height:2px;background:#c0c0c0"></div><div class="a" style="left:0px;top:969px;width:1278px;height:1px;background:#fff"></div><div class="a" style="left:0px;top:970px;width:1278px;height:1px;background:#8c8c8c"></div><div class="a" style="left:0px;top:987px;width:1278px;height:1px;background:#fff"></div><div class="a" style="left:0px;top:988px;width:1278px;height:2px;background:#8c8c8c"></div><div class="t" style="left:57px;top:974px;font-size:11px;;">Market: smart</div><div class="t" style="left:179px;top:974px;font-size:11px;;">-</div><div class="t" style="left:243px;top:974px;font-size:11px;;">Catalog: 60D</div><div class="t" style="left:365px;top:974px;font-size:11px;;">-</div><div class="a" style="left:192px;top:532px;width:978px;height:432px;background:#d4d0c8;box-shadow:inset 1px 1px #d4d0c8,inset -1px -1px #404040,inset 2px 2px #fff,inset -2px -2px #808080"></div><div class="a" style="left:196px;top:536px;width:970px;height:23px;background:#0a246a"></div><svg class="a" style="left:198px;top:537px" width="20" height="20" viewBox="0 0 20 20"><rect width="20" height="20" fill="#c9dce0"/><path d="M4 17 L17 1.5" stroke="#0a5af0" stroke-width="2"/><path d="M7 13 l5 -5 M6 11 l4 -4 M8 14 l4 -4 M12 6 l3 -3" stroke="#0a5af0" stroke-width="2.2"/><circle cx="7" cy="9" r="0.9" fill="#0a5af0"/><circle cx="8" cy="15.5" r="0.9" fill="#0a5af0"/><circle cx="7.5" cy="17.5" r="0.7" fill="#0a5af0"/></svg><div class="t" style="left:220px;top:541px;font-size:14px;color:#fff;letter-spacing:1.286px;">Footnote</div><div class="a" style="left:1143px;top:538px;width:21px;height:19px;box-shadow:inset 1px 1px #fff,inset -1px -1px #404040,inset -2px -2px #808080;background:#d4d0c8"></div><svg class="a" style="left:1149px;top:543px" width="10" height="9" viewBox="0 0 10 9"><path d="M1 1 L9 8 M9 1 L1 8" stroke="#000" stroke-width="2"/></svg><svg class="a" style="left:199px;top:565px" width="31" height="29" viewBox="0 0 31 29"><path d="M8 1 h12 l4 4 v15 h-16z" fill="#f0f0f0" stroke="#b0b0b0"/><path d="M11 6h9M11 9h9M11 12h9" stroke="#b8b8b8"/><path d="M10 22 Q12 16 18 15 H24 Q29 16 30 21 V26 H10Z" fill="#a4a4a4"/><path d="M14 20 Q16 17 19 17 H24 Q27 18 27 20Z" fill="#c8c8c8"/><path d="M3 14 L14 27 M15 13 L2 27" stroke="#f00000" stroke-width="3"/></svg><svg class="a" style="left:240px;top:567px" width="24" height="23" viewBox="0 0 24 23"><path d="M12 0.5 L14.6 8.6 L23.5 8.8 L16.3 13.8 L19.2 22 L12 17 L4.8 22 L7.7 13.8 L0.5 8.8 L9.4 8.6 Z" fill="#f8d820" stroke="#c88010" stroke-width="0.9"/><path d="M12 1 L12 17 M0.5 8.8 L12 12 L23.5 8.8 M4.8 22 L12 12 L19.2 22" fill="none" stroke="#d8a010" stroke-width="0.8"/><path d="M12 3 L13.5 9 L20 9.5" fill="none" stroke="#fff8a0" stroke-width="1"/></svg><svg class="a" style="left:274px;top:565px" width="28" height="29" viewBox="0 0 28 29"><path d="M13 1 h9 l-1 7 h-9z" fill="#ececec" stroke="#6a6a6a" stroke-width="0.8"/><path d="M3 8 Q4 7 6 7 H24 L27 10 V20 L24 23 H5 L3 20Z" fill="#e6e6e2" stroke="#707070" stroke-width="0.8"/><path d="M7 10 H19 L20 12 H7Z" fill="#101010"/><rect x="18" y="11" width="2" height="2" fill="#1040a0"/><path d="M23 10 L27 11 V21 L24 23Z" fill="#404040"/><path d="M5 19 H18 L16 28 H0Z" fill="#f2f2f2" stroke="#5a5a5a" stroke-width="0.8"/></svg><svg class="a" style="left:311px;top:566px" width="29" height="27" viewBox="0 0 29 27"><path d="M1 15 L16 1 L28 8 L13 22 Z" fill="#3a6ab0" stroke="#1a3a70"/><path d="M1 15 L13 22 L13 26 L1 19 Z" fill="#e8e8e8" stroke="#404040"/><path d="M13 22 L28 8 L28 12 L13 26z" fill="#1a3a70"/><path d="M12 8 q2-4 6-2 q2 2 -2 5 v2" fill="none" stroke="#fff" stroke-width="2"/><circle cx="15" cy="16" r="1.3" fill="#fff"/></svg><div class="a" style="left:196px;top:620px;width:970px;height:306px;background:#d4d0c8;box-shadow:inset 2px 2px #fff,inset -2px -2px #404040,inset 4px 4px #6c6c6c,inset -4px -4px #fff"></div><div class="a" style="left:197px;top:600px;width:78px;height:22px;background:#d4d0c8;border-radius:2px 2px 0 0;box-shadow:inset 1px 1px #fff,inset -1px 0 #404040"></div><div class="t" style="left:203px;top:606px;font-size:11px;;letter-spacing:-0.154px;">Ident. end no.</div><div class="a" style="left:275px;top:602px;width:73px;height:20px;background:#d4d0c8;border-radius:2px 2px 0 0;box-shadow:inset 1px 1px #fff,inset -1px 0 #404040"></div><div class="t" style="left:280px;top:608px;font-size:11px;;letter-spacing:-0.083px;">Find footnote</div><div class="a" style="left:200px;top:624px;width:418px;height:5px;background:#d4d0c8;box-shadow:inset 0 1px #fff,inset 0 -1px #404040"></div><div class="a" style="left:200px;top:629px;width:419px;height:28px;background:#ccccff;outline:1px dotted #fff;outline-offset:-1px"></div><div class="a" style="left:618px;top:629px;width:1px;height:28px;background:#808080"></div><div class="t" style="left:201px;top:640px;font-size:11.67px;font-family:&quot;Liberation Mono&quot;,monospace;">002</div><div class="t" style="left:285px;top:640px;font-size:11.67px;font-family:&quot;Liberation Mono&quot;,monospace;white-space:pre;">From Chassis: L 000001   From Date: 30/08/2002</div><div class="a" style="left:647px;top:931px;width:67px;height:24px;background:#d4d0c8;border:1px solid #202020;box-shadow:inset 1px 1px #fff,inset -1px -1px #404040,inset -2px -2px #808080"></div><div class="t" style="left:667px;top:938px;font-size:11px;;">Close</div></body></html>
